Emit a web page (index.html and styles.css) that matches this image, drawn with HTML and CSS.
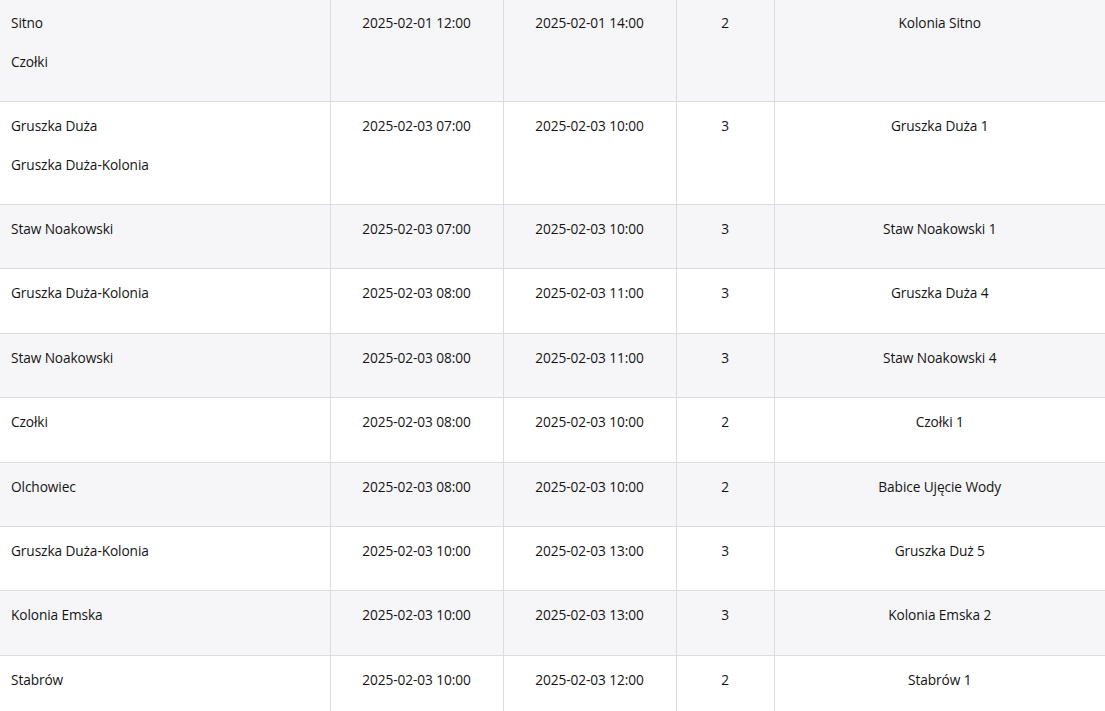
FILE: index.html
```html
<!DOCTYPE html>
<html lang="pl">
<head>
<meta charset="utf-8">
<title>Harmonogram</title>
<link rel="stylesheet" href="styles.css">
</head>
<body>
<table class="schedule">
  <colgroup>
    <col class="c-place">
    <col class="c-date">
    <col class="c-date">
    <col class="c-num">
    <col class="c-station">
  </colgroup>
  <tbody>
    <tr>
      <td class="place"><div class="item">Sitno</div><div class="item">Czołki</div></td>
      <td><div class="item">2025-02-01 12:00</div></td>
      <td><div class="item">2025-02-01 14:00</div></td>
      <td><div class="item">2</div></td>
      <td><div class="item">Kolonia Sitno</div></td>
    </tr>
    <tr>
      <td class="place"><div class="item">Gruszka Duża</div><div class="item">Gruszka Duża-Kolonia</div></td>
      <td><div class="item">2025-02-03 07:00</div></td>
      <td><div class="item">2025-02-03 10:00</div></td>
      <td><div class="item">3</div></td>
      <td><div class="item">Gruszka Duża 1</div></td>
    </tr>
    <tr>
      <td class="place"><div class="item">Staw Noakowski</div></td>
      <td><div class="item">2025-02-03 07:00</div></td>
      <td><div class="item">2025-02-03 10:00</div></td>
      <td><div class="item">3</div></td>
      <td><div class="item">Staw Noakowski 1</div></td>
    </tr>
    <tr>
      <td class="place"><div class="item">Gruszka Duża-Kolonia</div></td>
      <td><div class="item">2025-02-03 08:00</div></td>
      <td><div class="item">2025-02-03 11:00</div></td>
      <td><div class="item">3</div></td>
      <td><div class="item">Gruszka Duża 4</div></td>
    </tr>
    <tr>
      <td class="place"><div class="item">Staw Noakowski</div></td>
      <td><div class="item">2025-02-03 08:00</div></td>
      <td><div class="item">2025-02-03 11:00</div></td>
      <td><div class="item">3</div></td>
      <td><div class="item">Staw Noakowski 4</div></td>
    </tr>
    <tr>
      <td class="place"><div class="item">Czołki</div></td>
      <td><div class="item">2025-02-03 08:00</div></td>
      <td><div class="item">2025-02-03 10:00</div></td>
      <td><div class="item">2</div></td>
      <td><div class="item">Czołki 1</div></td>
    </tr>
    <tr>
      <td class="place"><div class="item">Olchowiec</div></td>
      <td><div class="item">2025-02-03 08:00</div></td>
      <td><div class="item">2025-02-03 10:00</div></td>
      <td><div class="item">2</div></td>
      <td><div class="item">Babice Ujęcie Wody</div></td>
    </tr>
    <tr>
      <td class="place"><div class="item">Gruszka Duża-Kolonia</div></td>
      <td><div class="item">2025-02-03 10:00</div></td>
      <td><div class="item">2025-02-03 13:00</div></td>
      <td><div class="item">3</div></td>
      <td><div class="item">Gruszka Duż 5</div></td>
    </tr>
    <tr>
      <td class="place"><div class="item">Kolonia Emska</div></td>
      <td><div class="item">2025-02-03 10:00</div></td>
      <td><div class="item">2025-02-03 13:00</div></td>
      <td><div class="item">3</div></td>
      <td><div class="item">Kolonia Emska 2</div></td>
    </tr>
    <tr>
      <td class="place"><div class="item">Stabrów</div></td>
      <td><div class="item">2025-02-03 10:00</div></td>
      <td><div class="item">2025-02-03 12:00</div></td>
      <td><div class="item">2</div></td>
      <td><div class="item">Stabrów 1</div></td>
    </tr>
  </tbody>
</table>
</body>
</html>
```
FILE: styles.css
```css
html, body {
  margin: 0;
  padding: 0;
  background: #ffffff;
}

body {
  font-family: "Open Sans", "Noto Sans", "Liberation Sans", sans-serif;
  font-size: 13.7px;
  letter-spacing: -0.1px;
  color: #141414;
  overflow: hidden;
}

.schedule {
  width: 1105px;
  margin-top: -2px;
  border-collapse: collapse;
  table-layout: fixed;
}

.c-place { width: 330px; }
.c-date { width: 173px; }
.c-num { width: 98px; }
.c-station { width: 331px; }

.schedule tr:nth-child(odd) td {
  background: #f6f6f8;
}

.schedule tr:nth-child(even) td {
  background: #ffffff;
}

.schedule td {
  border: 1px solid #dcdcdf;
  vertical-align: top;
  text-align: center;
  padding: 15px 10px 9.8px;
}

.schedule td:first-child {
  border-left: none;
}

.schedule td:last-child {
  border-right: none;
}

.schedule td.place {
  text-align: left;
  padding-left: 11px;
}

.item {
  line-height: 18.6px;
  margin-bottom: 20px;
}
```
